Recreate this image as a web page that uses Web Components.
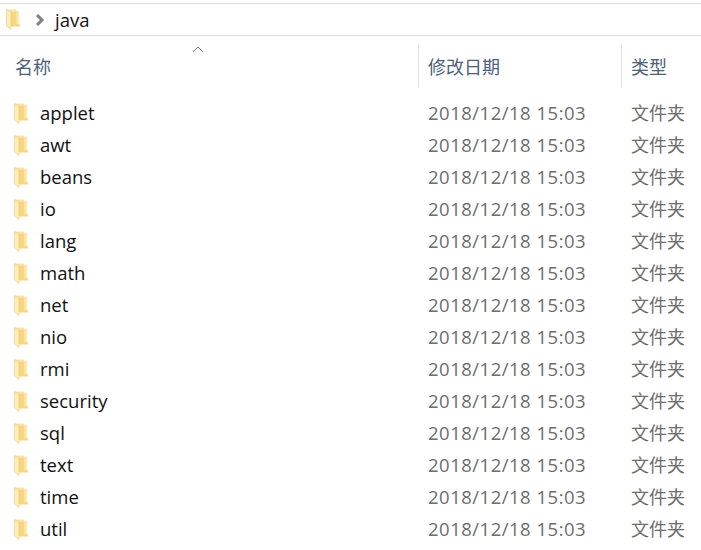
<!DOCTYPE html>
<html>
<head>
<meta charset="utf-8">
<title>java</title>
<style>
  html, body { margin: 0; background: #fff; overflow: hidden; }
  body { width: 701px; height: 550px; font-family: "Open Sans", "Noto Sans CJK SC", sans-serif; }
</style>
</head>
<body>
<file-explorer></file-explorer>

<template id="folder-tpl">
  <style>
    :host { display: block; width: 15px; height: 21px; }
    svg { display: block; }
  </style>
  <svg width="15" height="21" viewBox="0 0 15 21">
    <path d="M0.5 0.5H10V2H12.5V16H4Z" fill="#fbe29a"/>
    <path d="M5 3H10V15H13.5V16.5H14.5V17.5H5Z" fill="#f7d67e"/>
    <path d="M10.5 2.5H12.5V15H10.5Z" fill="#fce3a0"/>
    <path d="M0.5 0.5L5 3V20.5L0.5 17Z" fill="#fdeeb9" stroke="#e9cf8a" stroke-width=".7"/>
  </svg>
</template>

<script>
class FolderIcon extends HTMLElement {
    constructor() {
        super();
        this.attachShadow({ mode: 'open' });
        this.shadowRoot.appendChild(document.getElementById('folder-tpl').content.cloneNode(true));
    }
}
customElements.define('folder-icon', FolderIcon);

class BreadcrumbBar extends HTMLElement {
    constructor() {
        super();
        this.attachShadow({ mode: 'open' });
        this.shadowRoot.innerHTML = `<style>
            :host { display: flex; align-items: center; box-sizing: border-box; height: 33px; margin-top: 3px;
                border-top: 1px solid #dcdcdc; border-bottom: 1px solid #dcdcdc; padding-left: 6px; color: #111; font-size: 18.5px; }
            .chev { margin-left: 14px; margin-right: 10px; display: block; }
            span { line-height: 30px; }
        </style>
        <folder-icon></folder-icon>
        <svg class="chev" width="10" height="12" viewBox="0 0 10 12"><path d="M2 1L7 6L2 11" fill="none" stroke="#808080" stroke-width="3"/></svg>
        <span><slot></slot></span>`;
    }
}
customElements.define('breadcrumb-bar', BreadcrumbBar);

class ColumnHeader extends HTMLElement {
    constructor() {
        super();
        this.attachShadow({ mode: 'open' });
        this.shadowRoot.innerHTML = `<style>
            :host { display: grid; grid-template-columns: 418px 203px 1fr; height: 43px; margin-top: 9px; color: #4c607a; font-size: 18px; position: relative; }
            div { display: flex; align-items: center; padding-left: 9px; padding-bottom: 2px; }
            div:first-of-type { padding-left: 15px; }
            .col { border-left: 1px solid #e3e3e3; }
            .sort { position: absolute; left: 192px; top: 1px; }
        </style>
        <div>名称</div>
        <div class="col">修改日期</div>
        <div class="col">类型</div>
        <svg class="sort" width="12" height="7" viewBox="0 0 12 7"><path d="M1 6L6 1L11 6" fill="none" stroke="#777" stroke-width="1"/></svg>`;
    }
}
customElements.define('column-header', ColumnHeader);

class FileRow extends HTMLElement {
    constructor() {
        super();
        this.attachShadow({ mode: 'open' });
    }
    connectedCallback() {
        this.shadowRoot.innerHTML = `<style>
            :host { display: grid; grid-template-columns: 428px 203px 1fr; height: 32px; align-items: center; font-size: 18px; color: #6d6d6d; white-space: nowrap; }
            .name { display: flex; align-items: center; gap: 11px; padding-left: 14px; color: #111; font-size: 18.5px; }
            .name span { margin-top: -2px; }
            .date { font-size: 18.5px; letter-spacing: .5px; margin-top: -2px; }
            .type { margin-top: -2px; }
        </style>
        <div class="name"><folder-icon></folder-icon><span><slot></slot></span></div>
        <div class="date">${this.getAttribute('date')}</div>
        <div class="type">${this.getAttribute('type')}</div>`;
    }
}
customElements.define('file-row', FileRow);

class FileExplorer extends HTMLElement {
    constructor() {
        super();
        this.attachShadow({ mode: 'open' });
        this.folders = ['applet', 'awt', 'beans', 'io', 'lang', 'math', 'net', 'nio', 'rmi', 'security', 'sql', 'text', 'time', 'util'];
    }
    connectedCallback() {
        this.shadowRoot.innerHTML = `<style>
            :host { display: block; }
            .rows { margin-top: 9px; }
        </style>
        <breadcrumb-bar>java</breadcrumb-bar>
        <column-header></column-header>
        <div class="rows">
            ${this.folders.map(f => `<file-row date="2018/12/18 15:03" type="文件夹">${f}</file-row>`).join('')}
        </div>`;
    }
}
customElements.define('file-explorer', FileExplorer);
</script>
</body>
</html>
